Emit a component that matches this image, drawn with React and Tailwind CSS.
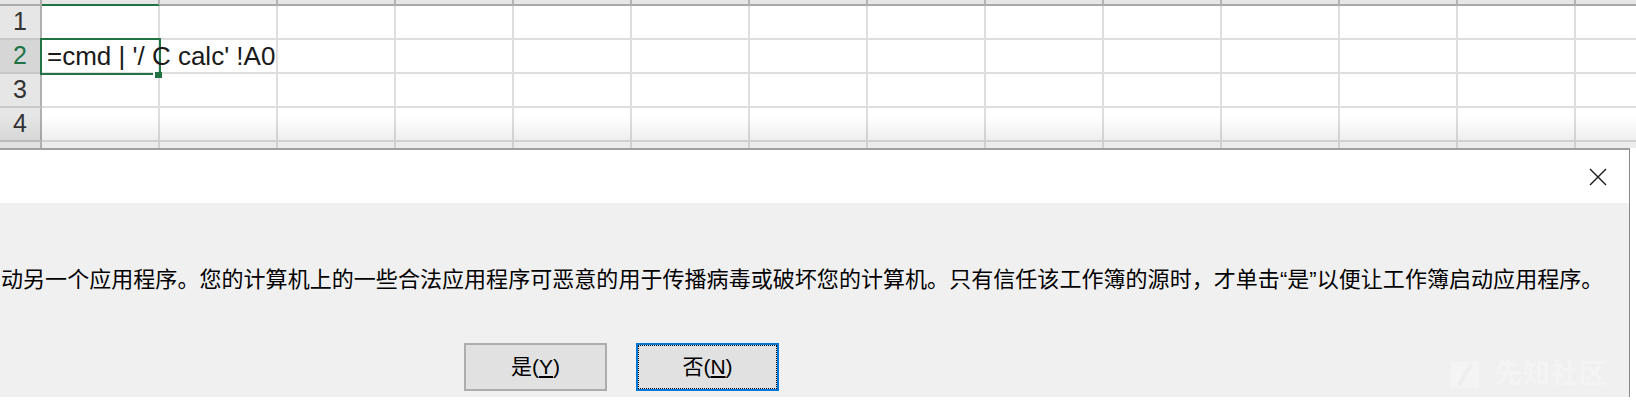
const cols = Array.from({ length: 14 }, (_, i) => i);
const rows = [1, 2, 3, 4];

const font = { fontFamily: '"Liberation Sans", "Noto Sans CJK SC", sans-serif' };

const CloseIcon = () => (
  <svg width="18" height="18" viewBox="0 0 18 18" fill="none" stroke="#1a1a1a" strokeWidth="1.4">
    <path d="M1 1L17 17M17 1L1 17" />
  </svg>
);

const Sheet = () => (
  <div className="relative h-[148px] overflow-hidden bg-white">
    {/* column headers */}
    <div className="flex h-[6px]">
      <div className="h-full w-[42px] shrink-0 border-r-2 border-b-2 border-[#ababab] bg-[#e6e6e6]" />
      {cols.map((c) => (
        <div
          key={c}
          className={
            c === 0
              ? "h-full w-[118px] shrink-0 border-r-2 border-b-2 border-r-[#b4b4b4] border-b-[#217346] bg-[#e6e6e6]"
              : "h-full w-[118px] shrink-0 border-r-2 border-b-2 border-r-[#b4b4b4] border-b-[#a8a8a8] bg-[#e6e6e6]"
          }
        />
      ))}
    </div>

    {rows.map((r) => (
      <div key={r} className="flex h-[34px]">
        <div
          className={
            r === 2
              ? "flex h-full w-[42px] shrink-0 items-center justify-center border-r-2 border-b-2 border-r-[#217346] border-b-[#c8c8c8] bg-[#d6d6d6] text-[25px] text-[#217346]"
              : "flex h-full w-[42px] shrink-0 items-center justify-center border-r-2 border-b-2 border-r-[#b0b0b0] border-b-[#c8c8c8] bg-[#e6e6e6] text-[25px] text-[#333]"
          }
          style={font}
        >
          {r}
        </div>
        {cols.map((c) => (
          <div key={c} className="relative h-full w-[118px] shrink-0 border-r-2 border-b-2 border-[#dedede]">
            {r === 2 && c === 0 ? (
              <span className="absolute left-[5px] top-0 z-30 flex h-full items-center whitespace-nowrap text-[26px] leading-none text-[#1a1a1a]" style={font}>
                =cmd | '/ C calc' !A0
              </span>
            ) : null}
          </div>
        ))}
      </div>
    ))}

    {/* partial row 5 */}
    <div className="flex h-[6px] bg-[#ececec]">
      <div className="h-full w-[42px] shrink-0 border-r-2 border-[#b0b0b0] bg-[#e2e2e2]" />
      {cols.map((c) => (
        <div key={c} className="h-full w-[118px] shrink-0 border-r-2 border-[#d0d0d0]" />
      ))}
    </div>

    {/* dialog shadow over row 4 */}
    <div className="pointer-events-none absolute left-0 right-0 top-[116px] h-[26px] bg-linear-to-b from-transparent to-black/[0.07]" />

    {/* selection */}
    <div className="absolute left-[40px] top-[38px] z-20 h-[37px] w-[121px] border-2 border-[#217346]" />
    <div className="absolute left-[153px] top-[72px] z-40 h-[6px] w-[9px] border-l-2 border-white bg-[#217346]" />
  </div>
);

const Dialog = () => (
  <div className="flex h-[249px] w-[1630px] flex-col border-t-2 border-r border-t-[#a0a0a0] border-r-[#8a8a8a]">
    <div className="flex h-[53px] items-center justify-end bg-white pr-[22px]">
      <CloseIcon />
    </div>
    <div className="relative flex flex-1 flex-col bg-[#f0f0f0]" style={font}>
      <p className="whitespace-nowrap pl-[1px] pt-[62px] text-[22px] leading-[30px] tracking-[0.05px] text-black">
        动另一个应用程序。您的计算机上的一些合法应用程序可恶意的用于传播病毒或破坏您的计算机。只有信任该工作簿的源时，才单击“是”以便让工作簿启动应用程序。
      </p>
      <div className="mt-[48px] flex gap-[29px] pl-[464px]">
        <button className="h-[48px] w-[143px] border-2 border-[#adadad] bg-[#e1e1e1] text-[21px] text-black">
          是(<span className="underline underline-offset-2">Y</span>)
        </button>
        <button className="relative h-[48px] w-[143px] border-2 border-[#0078d7] bg-[#e1e1e1] text-[21px] text-black">
          <span className="absolute inset-0 border border-dotted border-black" />
          否(<span className="underline underline-offset-2">N</span>)
        </button>
      </div>

      {/* watermark */}
      <div className="pointer-events-none absolute bottom-[9px] right-[22px] flex items-center gap-[16px] text-[#f4f4f4]">
        <div className="flex h-[26px] w-[28px] items-center justify-center bg-[#f4f4f4]">
          <div className="h-[24px] w-[4px] rotate-[30deg] bg-[#eeeeee]" />
        </div>
        <span className="text-[27px] font-bold leading-none tracking-[1px]">先知社区</span>
      </div>
    </div>
  </div>
);

export default function App() {
  return (
    <div className="h-[406px] w-[1636px] overflow-hidden bg-white">
      <Sheet />
      <Dialog />
    </div>
  );
}
